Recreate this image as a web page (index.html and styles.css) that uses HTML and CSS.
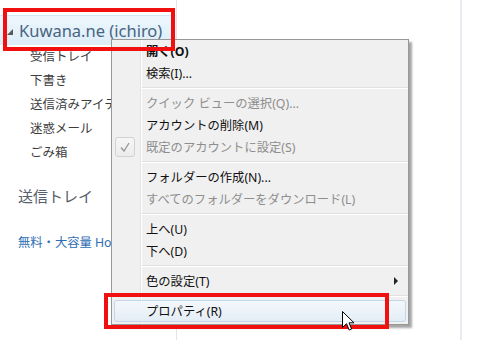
FILE: index.html
```html
<!DOCTYPE html>
<html lang="ja">
<head>
  <meta charset="UTF-8">
  <meta name="viewport" content="width=device-width, initial-scale=1.0">
  <title>Windows Live メール</title>
  <link rel="stylesheet" href="styles.css">
</head>
<body>
  <div class="app">
    <!-- 左のフォルダー一覧 -->
    <aside class="nav">
      <div class="account">
        <svg class="twisty" width="6" height="6" viewBox="0 0 6 6"><path d="M6 0 L6 6 L0 6 Z" fill="#5a5a5a"/></svg>
        <span class="account-name">Kuwana.ne (ichiro)</span>
      </div>
      <ul class="folders">
        <li>受信トレイ</li>
        <li>下書き</li>
        <li>送信済みアイテム</li>
        <li>迷惑メール</li>
        <li>ごみ箱</li>
      </ul>
      <div class="outbox">送信トレイ</div>
      <a class="promo" href="#">無料・大容量 Hotmail</a>
    </aside>
    <main class="content"></main>
    <div class="side"></div>
  </div>

  <!-- 右クリックメニュー -->
  <div class="context-menu">
    <div class="item bold">開く(O)</div>
    <div class="item">検索(I)...</div>
    <div class="sep"></div>
    <div class="item disabled">クイック ビューの選択(Q)...</div>
    <div class="item">アカウントの削除(M)</div>
    <div class="item disabled checked">
      <span class="check">
        <svg width="12" height="12" viewBox="0 0 12 12"><path d="M2 6.5 L5 10 L10 2" fill="none" stroke="#9a9a9a" stroke-width="1.4"/></svg>
      </span>
      既定のアカウントに設定(S)
    </div>
    <div class="sep"></div>
    <div class="item">フォルダーの作成(N)...</div>
    <div class="item disabled">すべてのフォルダーをダウンロード(L)</div>
    <div class="sep"></div>
    <div class="item">上へ(U)</div>
    <div class="item">下へ(D)</div>
    <div class="sep"></div>
    <div class="item">色の設定(T)<span class="submenu"></span></div>
    <div class="sep"></div>
    <div class="item hover">プロパティ(R)</div>
  </div>

  <!-- 赤い囲み -->
  <div class="mark mark-account"></div>
  <div class="mark mark-props"></div>

  <svg class="cursor" width="13" height="21" viewBox="0 0 13 21">
    <path d="M0.5 0.5 L0.5 16.5 L4.5 12.7 L7.2 19 L9.6 18 L7 11.8 L12 11.8 Z" fill="#fff" stroke="#000" stroke-width="1"/>
  </svg>
</body>
</html>
```

FILE: styles.css
```css
/* 全体 */
body {
  margin: 0;
  background-color: #fff;
  font-family: 'Noto Sans', 'Noto Sans CJK JP', sans-serif;
  width: 500px;
  height: 340px;
  overflow: hidden;
}

.app {
  display: flex;
  height: 340px;
}

/* 左ペイン */
.nav {
  width: 176px;
  flex: none;
  border-right: 1px solid #e4e4e4;
  padding-top: 15px;
  overflow: hidden;
  white-space: nowrap;
}

.account {
  display: flex;
  align-items: center;
  height: 29px;
  padding-left: 7px;
  border-top: 1px solid #cfe7f6;
  background: linear-gradient(#eef7fd, #dcedf9);
}

.twisty {
  margin-right: 6px;
  margin-top: 3px;
}

.account-name {
  font-size: 16.5px;
  color: #48647f;
}

.folders {
  list-style: none;
  margin: 0;
  padding: 0;
}

.folders li {
  height: 24px;
  line-height: 24px;
  padding-left: 30px;
  font-size: 12.5px;
  color: #3c3c3c;
}

.outbox {
  margin-top: 20px;
  padding-left: 18px;
  font-size: 15px;
  color: #56606a;
}

.promo {
  display: block;
  margin-top: 27px;
  padding-left: 18px;
  font-size: 12.3px;
  color: #2e6cb4;
  text-decoration: none;
}

.content {
  width: 283px;
  flex: none;
}

.side {
  flex: none;
  width: 2px;
  background-color: #e8ebef;
}

/* メニュー */
.context-menu {
  position: absolute;
  left: 111px;
  top: 39px;
  width: 296px;
  padding-bottom: 2px;
  border: 1px solid #979797;
  background:
    linear-gradient(to right, transparent 28px, #e2e3e3 28px, #e2e3e3 29px, #fff 29px, #fff 30px, transparent 30px),
    #f0f0f0;
  box-shadow: 3px 3px 2px rgba(0, 0, 0, 0.35);
  font-size: 12.3px;
  color: #111;
}

.item {
  display: flex;
  align-items: center;
  height: 22px;
  padding-left: 34px;
  padding-right: 10px;
}

.item.bold {
  font-weight: 700;
}

.item.disabled {
  color: #8e8e8e;
}

.item.checked {
  padding-left: 3px;
}

.check {
  display: flex;
  align-items: center;
  justify-content: center;
  box-sizing: border-box;
  width: 20px;
  height: 20px;
  margin-right: 11px;
  border: 1px solid #d2d2d2;
  border-radius: 3px;
  background: linear-gradient(#f6f6f6, #ececec);
}

.submenu {
  margin-left: auto;
  width: 0;
  height: 0;
  border-top: 4px solid transparent;
  border-bottom: 4px solid transparent;
  border-left: 4px solid #222;
}

.sep {
  height: 8px;
  margin-left: 30px;
  background: linear-gradient(transparent 3px, #e0e0e0 3px, #e0e0e0 4px, #fff 4px, #fff 5px, transparent 5px);
}

.item.hover {
  margin: 0 2px;
  padding-left: 31px;
  border: 1px solid #c2d5e9;
  border-radius: 3px;
  height: 20px;
  background: linear-gradient(#f3f7fb, #e4edf6);
}

/* 赤枠 */
.mark {
  position: absolute;
  box-sizing: border-box;
  border: 4px solid #f01010;
}

.mark-account {
  left: 3px;
  top: 8px;
  width: 172px;
  height: 43px;
}

.mark-props {
  left: 104px;
  top: 293px;
  width: 285px;
  height: 36px;
}

.cursor {
  position: absolute;
  left: 342px;
  top: 311px;
}
```
